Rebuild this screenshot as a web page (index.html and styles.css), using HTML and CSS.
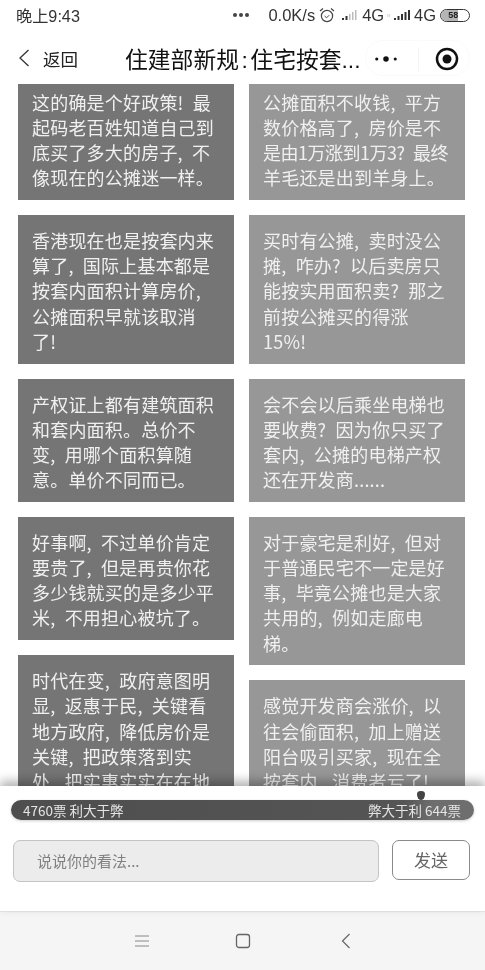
FILE: index.html
```html
<!DOCTYPE html>
<html lang="zh">
<head>
<meta charset="utf-8">
<title>住建部新规</title>
<link rel="stylesheet" href="styles.css">
</head>
<body>
<div class="phone">
  <div class="status">
    <span class="time">晚上9:43</span>
    <span class="status-right">
      <span class="dots"><i></i><i></i><i></i></span>
      <span>0.0K/s</span>
      <svg class="alarm" viewBox="0 0 16 16" width="16" height="16"><circle cx="8" cy="9" r="5.6" fill="none" stroke="#444" stroke-width="1.2"/><path d="M5.6 9l2 1.8 2.6-2.6" fill="none" stroke="#444" stroke-width="1"/><path d="M1 4l3-2.5M15 4l-3-2.5" stroke="#444" stroke-width="1.2"/></svg>
      <svg viewBox="0 0 18 12" width="18" height="12"><path d="M1 9h2v2H1zM4.500 7h2v4h-2z" fill="#333"/><path d="M8 5h1.500v6H8zM11 3h1.500v8H11zM14 1h1.500v10H14z" fill="#bbb"/></svg>
      <span>4G</span>
      <span class="tiny">ıı</span>
      <svg viewBox="0 0 18 12" width="18" height="12"><path d="M1 9h2v2H1zM4.500 7h2v4h-2zM8 5h2v6H8zM11.500 3h2v8h-2zM15 1h2v10h-2z" fill="#333"/></svg>
      <span>4G</span>
      <span class="battery"><span class="battery-fill">58</span></span>
    </span>
  </div>

  <header class="nav">
    <svg class="back" viewBox="0 0 12 20" width="12" height="20"><path d="M10.500 2L2 10l8.500 8" fill="none" stroke="#333" stroke-width="1.300"/></svg>
    <span class="back-text">返回</span>
    <h1 class="title">住建部新规<span class="colon">:</span>住宅按套...</h1>
    <div class="capsule">
      <svg viewBox="0 0 26 8" width="24" height="8"><circle cx="3" cy="4" r="1.700" fill="#111"/><circle cx="13" cy="4" r="3" fill="#111"/><circle cx="23" cy="4" r="1.700" fill="#111"/></svg>
      <span class="capsule-sep"></span>
      <svg viewBox="0 0 24 24" width="24" height="24"><circle cx="12" cy="12" r="10" fill="none" stroke="#111" stroke-width="2.500"/><circle cx="12" cy="12" r="4.500" fill="#111"/></svg>
    </div>
  </header>

  <main class="feed">
    <div class="columns">
      <div class="col">
        <p class="card dark">这的确是个好政策! 最起码老百姓知道自己到底买了多大的房子, 不像现在的公摊迷一样。</p>
        <p class="card dark">香港现在也是按套内来算了, 国际上基本都是按套内面积计算房价, 公摊面积早就该取消了!</p>
        <p class="card dark">产权证上都有建筑面积和套内面积。总价不变, 用哪个面积算随意。单价不同而已。</p>
        <p class="card dark">好事啊, 不过单价肯定要贵了, 但是再贵你花多少钱就买的是多少平米, 不用担心被坑了。</p>
        <p class="card dark">时代在变, 政府意图明显, 返惠于民, 关键看地方政府, 降低房价是关键, 把政策落到实处, 把实惠实实在在地</p>
      </div>
      <div class="col">
        <p class="card light">公摊面积不收钱, 平方数价格高了, 房价是不<span class="tight">是由1万涨到1万3? 最终</span>羊毛还是出到羊身上。</p>
        <p class="card light">买时有公摊, 卖时没公摊, 咋办? 以后卖房只能按实用面积卖? 那之前按公摊买的得涨 15%!</p>
        <p class="card light">会不会以后乘坐电梯也要收费? 因为你只买了套内, 公摊的电梯产权还在开发商......</p>
        <p class="card light">对于豪宅是利好, 但对于普通民宅不一定是好事, 毕竟公摊也是大家共用的, 例如走廊电梯。</p>
        <p class="card light">感觉开发商会涨价, 以往会偷面积, 加上赠送阳台吸引买家, 现在全按套内, 消费者亏了!</p>
      </div>
    </div>
  </main>

  <section class="panel">
    <span class="pin"></span>
    <div class="vote">
      <span>4760票 利大于弊</span>
      <span>弊大于利 644票</span>
    </div>
    <div class="composer">
      <div class="input">说说你的看法...</div>
      <div class="send">发送</div>
    </div>
  </section>

  <footer class="sysnav">
    <svg viewBox="0 0 16 14" width="16" height="14"><path d="M1 2h14M1 7h14M1 12h14" stroke="#888" stroke-width="1"/></svg>
    <svg class="home" viewBox="0 0 16 16" width="16" height="16"><rect x="1.500" y="1.500" width="13" height="13" rx="2.500" fill="none" stroke="#666" stroke-width="1.300"/></svg>
    <svg class="goback" viewBox="0 0 10 16" width="10" height="16"><path d="M8.500 1L1.500 8l7 7" fill="none" stroke="#666" stroke-width="1.200"/></svg>
  </footer>
</div>
</body>
</html>
```

FILE: styles.css
```css
* { box-sizing: border-box; }
html, body { margin: 0; padding: 0; background: #fff; }
body { font-family: "Liberation Sans", "Noto Sans CJK SC", sans-serif; }
.phone {
  width: 485px;
  height: 970px;
  display: flex;
  flex-direction: column;
  overflow: hidden;
  filter: blur(0.35px);
}
.status {
  height: 32px;
  flex: none;
  display: flex;
  align-items: center;
  justify-content: space-between;
  padding: 0 15px 2px 16px;
  color: #333;
  font-size: 16.500px;
}
.time { font-size: 16.200px; }
.status-right { display: flex; align-items: center; gap: 3px; }
.dots { display: flex; gap: 2px; margin-right: 16px; }
.dots i { width: 4px; height: 4px; border-radius: 50%; background: #444; }
.alarm { margin: 0 3px 0 1px; }
.tiny { font-size: 5px; color: #aaa; }
.battery {
  width: 30px;
  height: 13px;
  border: 1px solid #333;
  border-radius: 7px;
  margin-left: 1px;
  overflow: hidden;
  display: flex;
}
.battery-fill {
  width: 62%;
  background: #b5b5b5;
  font-size: 9px;
  font-weight: bold;
  line-height: 11px;
  text-align: right;
  color: #222;
}
.nav {
  height: 52px;
  flex: none;
  display: flex;
  align-items: center;
  padding: 0 15px 0 18px;
  position: relative;
}
.back { flex: none; }
.back-text { margin-left: 13px; font-size: 17.500px; color: #222; }
.title {
  margin: 0 0 0 47px;
  font-size: 22.800px;
  font-weight: 400;
  color: #111;
  white-space: nowrap;
}
.colon { margin: 0 2.500px; }
.capsule {
  position: absolute;
  left: 365px;
  top: 8px;
  width: 105px;
  height: 36px;
  border: 1px solid #fafafa;
  border-radius: 18px;
  display: flex;
  align-items: center;
  padding: 2px 10px 0 8px;
  justify-content: space-between;
}
.capsule-sep { width: 1px; height: 24px; background: #f4f4f4; margin-left: 4px; }
.feed {
  flex: none;
  height: 702px;
  overflow: hidden;
  background: #fff;
  padding: 0 20px 0 18px;
}
.columns { display: flex; gap: 15px; margin-top: -7.300px; }
.col { flex: 1 1 0; min-width: 0; display: flex; flex-direction: column; gap: 15px; }
.card {
  margin: 0;
  padding: 13px 19.500px 9.500px 14px;
  color: #f0f0f0;
  font-family: "Noto Sans CJK SC", sans-serif;
  font-size: 18px;
  letter-spacing: 0.200px;
  word-spacing: 5px;
  line-height: 25.200px;
}
.tight { white-space: nowrap; letter-spacing: -0.500px; }
.dark { background: #757575; }
.light { background: #979797; }
.panel {
  flex: none;
  height: 125px;
  background: #fff;
  position: relative;
  padding: 14px 11px 0;
  box-shadow: 0 -5px 10px rgba(0,0,0,.3);
  font-family: "Noto Sans CJK SC", sans-serif;
}
.pin {
  position: absolute;
  left: 417px;
  top: 5px;
  width: 8px;
  height: 9px;
  background: #444;
  border-radius: 50% 50% 50% 50% / 40% 40% 70% 70%;
}
.vote {
  height: 20px;
  border-radius: 10px;
  background: linear-gradient(90deg, #4e4e4e 0%, #555 85%, #6e6e6e 91%, #6e6e6e 100%);
  box-shadow: 0 1px 3px rgba(0,0,0,.2);
  color: #e4e4e4;
  font-size: 13.500px;
  line-height: 20px;
  display: flex;
  justify-content: space-between;
  padding: 0 13px 0 12px;
}
.composer {
  display: flex;
  align-items: flex-start;
  gap: 13px;
  margin: 20px 4px 0 2px;
}
.input {
  flex: 1;
  height: 42px;
  background: #ececec;
  border: 1px solid #c4c4c4;
  border-radius: 7px;
  padding-left: 23px;
  font-size: 15px;
  line-height: 40px;
  color: #808080;
}
.send {
  width: 78px;
  height: 40px;
  border: 1px solid #8a8a8a;
  border-radius: 7px;
  text-align: center;
  font-size: 17px;
  line-height: 38px;
  color: #666;
}
.sysnav {
  flex: none;
  height: 59px;
  background: #f5f5f5;
  border-top: 1px solid #e8e8e8;
  display: flex;
  align-items: center;
  padding-left: 134px;
}
.home { margin-left: 85px; }
.goback { margin-left: 90px; }
```
